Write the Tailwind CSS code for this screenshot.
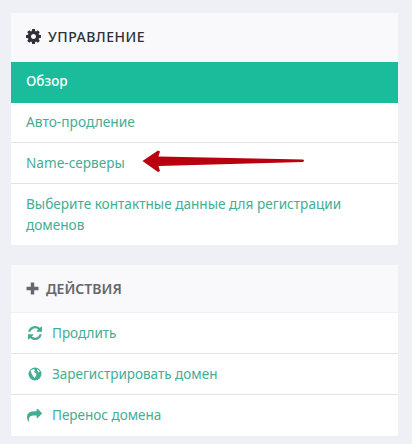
<!DOCTYPE html>
<html><head><meta charset="utf-8"><script src="https://cdn.jsdelivr.net/npm/@tailwindcss/browser@4"></script></head>
<body class="bg-[#eff0f6] font-['Noto_Sans',sans-serif] w-[412px] h-[444px] overflow-hidden">
<div class="pt-[13px] pl-[11px] w-[398px] flex flex-col gap-[20px]">
  <section class="bg-white rounded-[2px] overflow-hidden">
    <div class="h-[49px] bg-[#f9f9fb] px-[15px] pb-[2px] flex items-center gap-[7px] text-[#2d3038] text-[14px] font-medium tracking-[0.5px]">
      <svg class="w-[15px] h-[15px]" viewBox="0 0 1536 1536"><path fill="#2d3038" d="M1024 768q0-106-75-181t-181-75-181 75-75 181 75 181 181 75 181-75 75-181zm512-109v222q0 12-8 23t-20 13l-185 28q-19 54-39 91 35 50 107 138 10 12 10 25t-9 23q-27 37-99 108t-94 71q-12 0-26-9l-138-108q-44 23-91 38-16 136-29 186-7 28-36 28h-222q-14 0-24.500-8.500t-11.500-21.500l-28-184q-49-16-90-37l-141 107q-10 9-25 9-14 0-25-11-126-114-165-168-7-10-7-23 0-12 8-23 15-21 51-66.500t54-70.500q-27-50-41-99l-183-27q-13-2-21-12.500t-8-23.500v-222q0-12 8-23t19-13l186-28q14-46 39-92-40-57-107-138-10-12-10-24 0-10 9-23 26-36 98.500-107.500t94.500-71.500q13 0 26 10l138 107q44-23 91-38 16-136 29-186 7-28 36-28h222q14 0 24.500 8.500t11.500 21.500l28 184q49 16 90 37l142-107q9-9 24-9 13 0 25 10 129 119 165 170 7 8 7 22 0 12-8 23-15 21-51 66.500t-54 70.500q26 50 41 98l183 28q13 2 21 12.500t8 23.500z"/></svg>
      <span>УПРАВЛЕНИЕ</span>
    </div>
    <div class="h-[41px] bg-[#1abc9c] text-white px-[15px] pb-[3px] flex items-center text-[13.5px] font-medium">Обзор</div>
    <div class="h-[40px] px-[15px] flex items-center text-[13.75px] text-[#43ad95] border-b border-[#e3e3e6]">Авто-продление</div>
    <div class="h-[41px] px-[15px] flex items-center text-[13.6px] text-[#43ad95] border-b border-[#e3e3e6] relative">Name-серверы
      <svg class="absolute left-[130px] top-[5px] w-[165px] h-[26px]" viewBox="0 0 165 26"><path fill="#b8000f" d="M1.500 13 L17 2.500 L19 3.500 L17.500 8.500 L162 11.500 Q164 12.500 162 14 L17.500 18 L19 23 L17 24 Z"/></svg>
    </div>
    <div class="px-[15px] pt-[10px] pb-[10px] text-[13.6px] leading-[20.500px] text-[#43ad95]">Выберите контактные данные для регистрации доменов</div>
  </section>
  <section class="bg-white rounded-[2px] overflow-hidden">
    <div class="h-[48px] bg-[#f9f9fb] px-[15px] flex items-center gap-[7px] text-[#66666c] text-[14px] font-semibold border-b border-[#f1f1f4]">
      <svg class="w-[13px] h-[13px]" viewBox="0 0 13 13"><path fill="#66666c" d="M4.800 0.500h3.400v4.300h4.300v3.400H8.200v4.300H4.800V8.200H0.500V4.800H4.800z"/></svg>
      <span>ДЕЙСТВИЯ</span>
    </div>
    <div class="h-[41px] pl-[17px] pr-[15px] flex items-center gap-[10px] text-[13.5px] text-[#43ad95] border-b border-[#e3e3e6]">
      <svg class="w-[14px] h-[14px]" viewBox="0 0 1536 1536"><path fill="#43ad95" d="M1511 928q0 5-1 7-64 268-268 434.500t-478 166.500q-146 0-282.500-55t-243.500-157l-129 129q-19 19-45 19t-45-19-19-45v-448q0-26 19-45t45-19h448q26 0 45 19t19 45-19 45l-137 137q71 66 161 102t187 36q134 0 250-65t186-179q11-17 53-117 8-23 30-23h192q13 0 22.500 9.500t9.500 22.500zm25-800v448q0 26-19 45t-45 19h-448q-26 0-45-19t-19-45 19-45l138-138q-148-137-349-137-134 0-250 65t-186 179q-11 17-53 117-8 23-30 23h-199q-13 0-22.500-9.500t-9.500-22.500v-7q65-268 270-434.500t480-166.500q146 0 284 55.500t245 156.500l130-129q19-19 45-19t45 19 19 45z"/></svg>
      <span>Продлить</span>
    </div>
    <div class="h-[41px] pl-[17px] pr-[15px] flex items-center gap-[10px] text-[13.5px] text-[#43ad95] border-b border-[#e3e3e6]">
      <svg class="w-[14px] h-[14px]" viewBox="0 0 14 14"><circle cx="7" cy="7" r="6.500" fill="#43ad95"/><path fill="#fff" d="M2.500 3.500 L5.500 2 L7 3 L6 5 L8.500 6.500 L8 9 L6.500 11 L5 9 L3.500 6.500Z M9.500 2 L12 4.500 L10.500 5.500 L9 3.500Z"/></svg>
      <span>Зарегистрировать домен</span>
    </div>
    <div class="h-[41px] pl-[17px] pr-[15px] flex items-center gap-[10px] text-[13.5px] text-[#43ad95]">
      <svg class="w-[15px] h-[13px] -ml-[1px]" viewBox="0 128 1792 1536"><path fill="#43ad95" d="M1792 640q0 26-19 45l-512 512q-19 19-45 19t-45-19-19-45v-256h-224q-98 0-175.500 6t-154 21.500-133 42.500-105.500 69.500-80 101-48.500 138.500-17.500 181q0 55 5 123 0 6 2.500 23.500t2.500 26.500q0 15-8.500 25t-23.500 10q-16 0-28-17-7-9-13-22t-13.500-30-10.500-24q-127-285-127-451 0-199 53-333 162-403 875-403h224v-256q0-26 19-45t45-19 45 19l512 512q19 19 19 45z"/></svg>
      <span>Перенос домена</span>
    </div>
  </section>
</div>
</body></html>
